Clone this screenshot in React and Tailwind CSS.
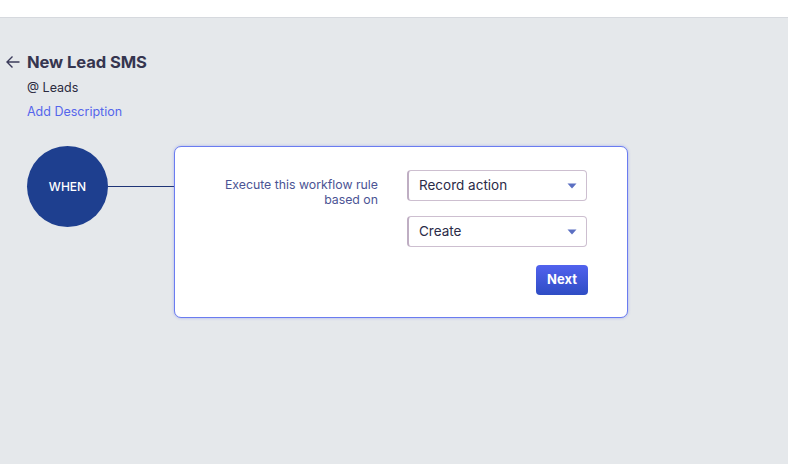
import React from "react";

function Caret() {
  return (
    <svg width="10" height="6" viewBox="0 0 10 6" className="shrink-0">
      <path d="M0.5 0.5h9L5 5.5z" fill="#5b6fc2" />
    </svg>
  );
}

function Select({ value }) {
  return (
    <div className="flex h-[31px] w-[180px] items-center justify-between rounded-[4px] border border-[#cdbfd0] border-l-2 border-l-[#bfaec3] bg-white pl-[10px] pr-[9px]">
      <span className="text-[13.5px] text-[#2b2b48]">{value}</span>
      <Caret />
    </div>
  );
}

export default function App() {
  return (
    <div
      className="flex h-[464px] w-full flex-col bg-[#e5e8eb]"
      style={{ fontFamily: "Inter, 'Noto Sans', sans-serif" }}
    >
      <div className="h-[18px] shrink-0 border-b border-[#d6d9de] bg-white" />

      <div className="flex items-center pl-[5px] pt-[34px]">
        <svg width="16" height="14" viewBox="0 0 16 14" className="mr-[6px]">
          <path
            d="M14.5 7H2M7.5 1.5L2 7l5.5 5.5"
            fill="none"
            stroke="#3b3b5a"
            strokeWidth="1.4"
          />
        </svg>
        <h1 className="text-[16.6px] font-bold leading-[20px] tracking-[-0.1px] text-[#35354f]">New Lead SMS</h1>
      </div>
      <div className="pl-[27px] pt-[8px] text-[12.5px] leading-[16px] text-[#2b2b40]">@ Leads</div>
      <div className="pl-[27px] pt-[8px] text-[12.5px] leading-[16px] text-[#5566ec]">Add Description</div>

      <div className="flex items-start pl-[27px] pt-[26px]">
        <div className="flex h-[81px] w-[81px] shrink-0 items-center justify-center rounded-full bg-[#1e3f8f] text-[12px] font-medium text-white">
          WHEN
        </div>
        <div className="mt-[40px] h-px w-[66px] bg-[#1f3577]" />
        <div className="flex h-[172px] w-[454px] flex-col rounded-[7px] border border-[#6a7cf0] bg-white pr-[39px] pt-[23px] shadow-[0_0_3px_rgba(90,110,240,0.45)]">
          <div className="flex items-start">
            <div className="w-[203px] pt-[7px] text-right text-[12.3px] leading-[15px] text-[#4b5494]">
              Execute this workflow rule
              <br />
              based on
            </div>
            <div className="ml-[29px] flex flex-col gap-[15px]">
              <Select value="Record action" />
              <Select value="Create" />
            </div>
          </div>
          <div className="mt-[18px] flex justify-end">
            <button className="h-[30px] w-[52px] rounded-[4px] bg-gradient-to-b from-[#5162ee] to-[#2e4dc4] text-[13px] font-bold text-white">
              Next
            </button>
          </div>
        </div>
      </div>
    </div>
  );
}
